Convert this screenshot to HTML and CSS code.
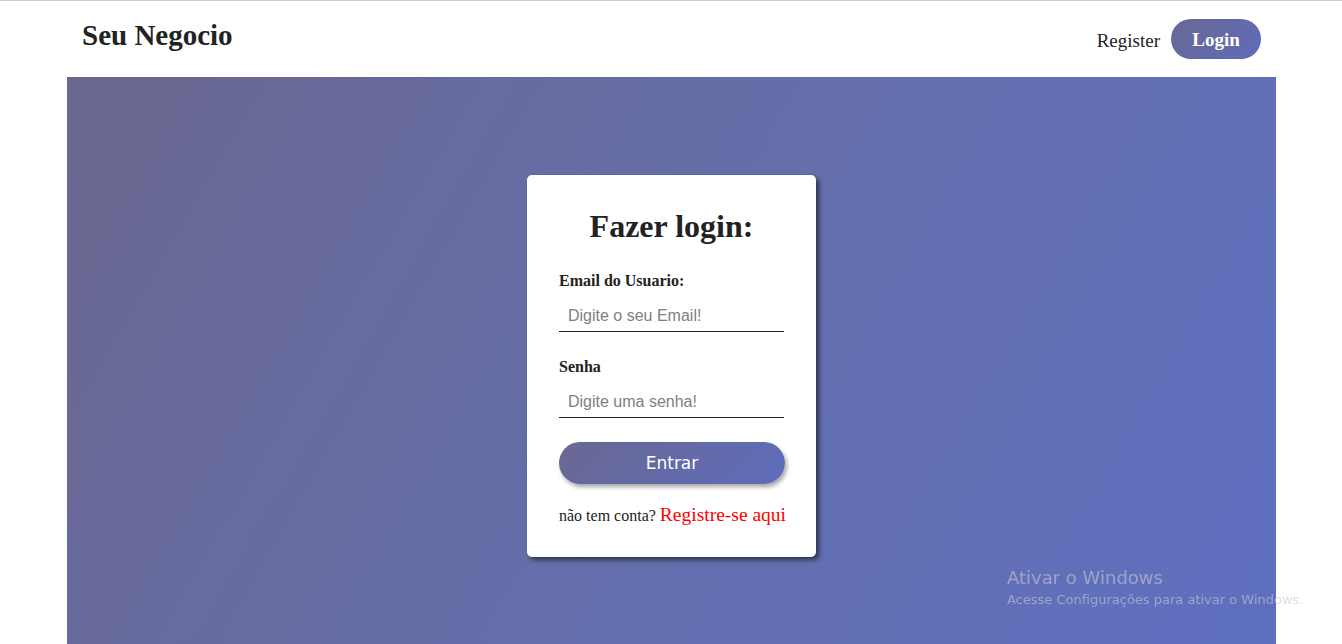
FILE: index.html
```html
<!DOCTYPE html>
<html lang="pt-BR">
<head>
<meta charset="utf-8">
<title>Seu Negocio</title>
<link rel="stylesheet" href="styles.css">
</head>
<body>
<header class="topbar">
  <div class="brand">Seu Negocio</div>
  <nav class="nav">
    <a class="nav-link" href="#">Register</a>
    <a class="nav-btn" href="#">Login</a>
  </nav>
</header>
<main class="hero">
  <form class="card">
    <h1 class="card-title">Fazer login:</h1>
    <label class="field-label">Email do Usuario:</label>
    <input class="field-input" type="text" placeholder="Digite o seu Email!">
    <label class="field-label second">Senha</label>
    <input class="field-input" type="password" placeholder="Digite uma senha!">
    <button class="submit" type="button">Entrar</button>
    <p class="signup">não tem conta? <a href="#" class="signup-link">Registre-se aqui</a></p>
  </form>
</main>
<div class="watermark">
  <div class="wm-title">Ativar o Windows</div>
  <div class="wm-sub">Acesse Configurações para ativar o Windows.</div>
</div>
</body>
</html>
```
FILE: styles.css
```css
html, body {
  margin: 0;
  padding: 0;
  height: 100%;
  overflow: hidden;
}
body {
  background: #fff;
  border-top: 1px solid #cfcfcf;
  font-family: "Liberation Serif", "Times New Roman", serif;
  color: #222;
}
.topbar {
  margin: 0 66px 0 67px;
  padding: 0 15px;
  height: 76px;
  display: flex;
  align-items: flex-start;
  justify-content: space-between;
}
.brand {
  font-size: 29px;
  font-weight: bold;
  margin-top: 18px;
  color: #222;
}
.nav {
  display: flex;
  align-items: center;
  gap: 11px;
  margin-top: 18px;
}
.nav-link {
  font-size: 19px;
  color: #222;
  text-decoration: none;
  padding-top: 3px;
}
.nav-btn {
  width: 90px;
  height: 40px;
  border-radius: 20px;
  background: linear-gradient(135deg, #6a6893, #5f6cb9);
  color: #fff;
  font-weight: bold;
  font-size: 19px;
  text-decoration: none;
  display: flex;
  align-items: center;
  justify-content: center;
  padding-top: 1px;
  box-sizing: border-box;
}
.hero {
  margin: 0 66px 0 67px;
  height: 567px;
  background: linear-gradient(120deg, #6a678f 0%, #6470b0 60%, #5e6fc0 100%);
  display: flex;
  justify-content: center;
  align-items: flex-start;
  padding-top: 98px;
  box-sizing: border-box;
}
.card {
  width: 289px;
  height: 382px;
  box-sizing: border-box;
  background: #fff;
  border-radius: 5px;
  box-shadow: 3px 3px 5px rgba(0, 0, 0, 0.55);
  padding: 30px 32px 0 32px;
  display: flex;
  flex-direction: column;
}
.card-title {
  margin: 0 0 24px 0;
  font-size: 32px;
  line-height: 42px;
  text-align: center;
  font-weight: bold;
  color: #222;
}
.field-label {
  font-size: 16px;
  font-weight: bold;
  line-height: 19px;
  color: #222;
}
.field-label.second {
  margin-top: 25px;
}
.field-input {
  margin-top: 11px;
  width: 225px;
  height: 31px;
  box-sizing: border-box;
  border: none;
  border-bottom: 1px solid #222;
  outline: none;
  padding: 0 9px;
  font-family: "Liberation Sans", Tahoma, sans-serif;
  font-size: 16px;
  color: #333;
  background: transparent;
}
.field-input::placeholder {
  color: #808080;
}
.submit {
  margin-top: 24px;
  width: 226px;
  height: 42px;
  border: none;
  border-radius: 21px;
  background: linear-gradient(135deg, #6a6893, #5e6cbb);
  color: #fff;
  font-family: "DejaVu Sans", Verdana, sans-serif;
  font-size: 17px;
  box-shadow: 2px 3px 4px rgba(0, 0, 0, 0.35);
  cursor: pointer;
}
.signup {
  margin: 20px 0 0 0;
  font-size: 16px;
  color: #222;
  white-space: nowrap;
}
.signup-link {
  color: #f00;
  font-size: 19.5px;
  text-decoration: none;
}
.watermark {
  position: fixed;
  left: 1007px;
  top: 566px;
  color: rgba(200, 200, 210, 0.6);
  font-family: "DejaVu Sans", "Segoe UI", sans-serif;
  white-space: nowrap;
}
.wm-title {
  font-size: 18px;
  line-height: 24px;
}
.wm-sub {
  font-size: 13px;
  line-height: 20px;
}
```
